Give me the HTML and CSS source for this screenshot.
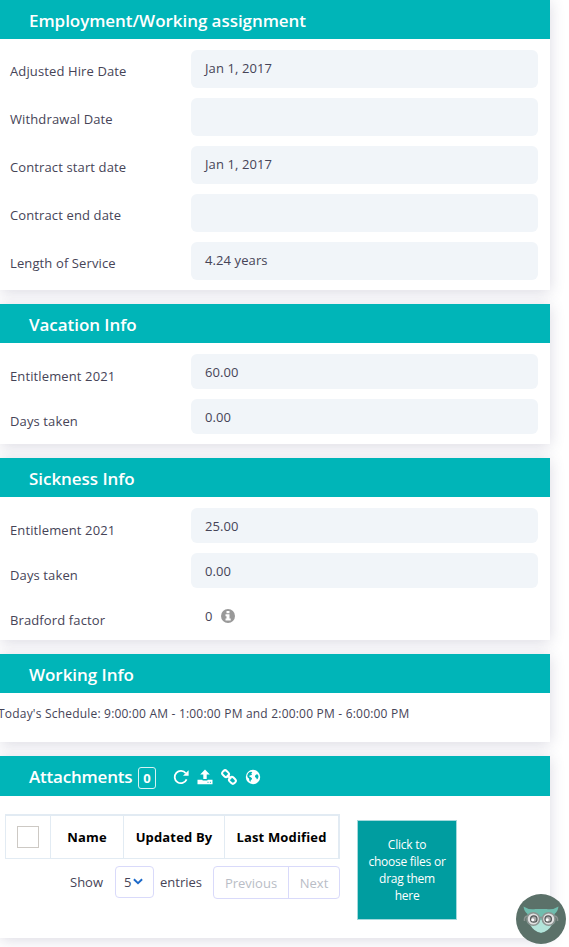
FILE: index.html
```html
<!DOCTYPE html>
<html lang="en">
<head>
    <meta charset="utf-8">
    <title>Employee Profile</title>
    <link rel="stylesheet" href="styles.css">
</head>
<body>
    <div class="container">

        <section class="card">
            <h2 class="card-head">Employment/Working assignment</h2>
            <div class="card-body">
                <div class="row"><label>Adjusted Hire Date</label><div class="field">Jan 1, 2017</div></div>
                <div class="row"><label>Withdrawal Date</label><div class="field"></div></div>
                <div class="row"><label>Contract start date</label><div class="field">Jan 1, 2017</div></div>
                <div class="row"><label>Contract end date</label><div class="field"></div></div>
                <div class="row"><label>Length of Service</label><div class="field">4.24 years</div></div>
            </div>
        </section>

        <section class="card">
            <h2 class="card-head">Vacation Info</h2>
            <div class="card-body compact">
                <div class="row"><label>Entitlement 2021</label><div class="field">60.00</div></div>
                <div class="row"><label>Days taken</label><div class="field">0.00</div></div>
            </div>
        </section>

        <section class="card">
            <h2 class="card-head">Sickness Info</h2>
            <div class="card-body compact sickness">
                <div class="row"><label>Entitlement 2021</label><div class="field">25.00</div></div>
                <div class="row"><label>Days taken</label><div class="field">0.00</div></div>
                <div class="row">
                    <label>Bradford factor</label>
                    <div class="field plain">0
                        <svg class="info" viewBox="0 0 14 14"><circle cx="7" cy="7" r="7" fill="#999"/><path d="M5.5 2h3v2.300h-3zM4.500 5.300h4v4.200h1.200v2H4.500v-2h1V7.200h-1z" fill="#fff"/></svg>
                    </div>
                </div>
            </div>
        </section>

        <section class="card">
            <h2 class="card-head">Working Info</h2>
            <div class="schedule">Today's Schedule: 9:00:00 AM - 1:00:00 PM and 2:00:00 PM - 6:00:00 PM</div>
        </section>

        <section class="card">
            <h2 class="card-head attachments-head">
                <span class="title">Attachments</span>
                <span class="count">0</span>
                <span class="tools">
                    <svg viewBox="0 0 16 16"><path d="M13.6 10.400A6.200 6.200 0 1 1 12.800 4.200" fill="none" stroke="#fff" stroke-width="1.800"/><path d="M15.600 1.200v5.600H10z" fill="#fff"/></svg>
                    <svg viewBox="0 0 16 16"><path d="M8 0.500L12.800 5.500H9.700V10H6.300V5.500H3.200z" fill="#fff"/><path d="M.5 10.700h4.700l.6.9h4.400l.6-.9h4.700V15.300H.5z" fill="#fff"/><path d="M10.500 13.300h1M12.900 13.300h1" stroke="#00b5b8" stroke-width="1"/></svg>
                    <svg viewBox="0 0 16 16"><g fill="none" stroke="#fff" stroke-width="2"><rect x="1.200" y="2" width="6.800" height="5.400" rx="2.200" transform="rotate(45 4.600 4.700)"/><rect x="8" y="8.600" width="6.800" height="5.400" rx="2.200" transform="rotate(45 11.400 11.300)"/><path d="M6 6l4 4"/></g></svg>
                    <svg viewBox="0 0 16 16"><circle cx="8" cy="8" r="7.200" fill="#fff"/><path d="M3 4.500L4.600 3l1.700-.2 1.100.8-1.200 1 .9.900-1.100.8-1.400.3-.4 1 1.700.7 1.200 1.100-.4 1.200-1 .8-.3 1.600-1-1.200-.4-2.200L2.700 8.500 2.200 6.800zM10.300 6.200l1.500-1 1.200.5.5 1.700-.4 1.900-1.100 1.200-.9-1.800-1.200-.7z" fill="#00b5b8"/></svg>
                </span>
            </h2>
            <div class="attachments">
                <div class="list">
                    <table>
                        <tr>
                            <th class="check"><span class="box"></span></th>
                            <th class="name">Name</th>
                            <th class="updated">Updated By</th>
                            <th>Last Modified</th>
                        </tr>
                    </table>
                    <div class="paging">
                        <span>Show</span>
                        <span class="select">5<svg viewBox="0 0 9 6"><path d="M.8 1l3.700 3.600L8.200 1" fill="none" stroke="#1b69c9" stroke-width="1.700"/></svg></span>
                        <span class="entries">entries</span>
                        <div class="pager"><span class="prev">Previous</span><span class="next">Next</span></div>
                    </div>
                </div>
                <div class="dropzone">Click to<br>choose files or<br>drag them<br>here</div>
            </div>
        </section>
    </div>

    <!-- help assistant -->
    <div class="helper">
        <svg viewBox="0 0 50 50">
            <circle cx="25" cy="25" r="25" fill="#5b7169"/>
            <path d="M7.500 12.500q5 3.500 12 2.500h11q7 1 12-2.500-.5 4.500-4 7.500v9Q32 34 25 39q-7-5-13.500-10v-9Q8 17 7.500 12.500z" fill="#70bdae"/>
            <path d="M14 30.500l7-1 4-4 4 4 7 1q-4 7.500-11 8.200-7-.7-11-8.200z" fill="#b3e4da"/>
            <g fill="#e2e2e2" stroke="#8b9491" stroke-width="1.600"><circle cx="17.300" cy="25" r="6.300"/><circle cx="32.700" cy="25" r="6.300"/></g>
            <path d="M11 22q-3 1-2.500 5M39 22q3 1 2.500 5M23.500 24q1.500-1.500 3 0" fill="none" stroke="#8b9491" stroke-width="1.500"/>
            <g fill="#aaa" stroke="#555a5a" stroke-width="1.300"><circle cx="17.800" cy="25" r="3.200"/><circle cx="32.200" cy="25" r="3.200"/></g>
            <circle cx="16.700" cy="25.700" r="1.500" fill="#fff"/><circle cx="31.200" cy="25.700" r="1.500" fill="#fff"/>
        </svg>
    </div>
</body>
</html>
```

FILE: styles.css
```css
* {
    box-sizing: border-box;
}
body {
    margin: 0;
    height: 947px;
    overflow: hidden;
    background: #fff;
    color: #464457;
    font-family: "Segoe UI", "Open Sans", "Noto Sans", sans-serif;
    font-size: 13px;
}
.container {
    width: 550px;
    display: flex;
    flex-direction: column;
    gap: 14px;
}
.card {
    background: #fff;
    box-shadow: 0 2px 14px rgba(69, 65, 110, .2);
}
.card-head {
    margin: 0;
    height: 39px;
    padding-left: 29px;
    background: #00b5b8;
    color: #fff;
    font-size: 17px;
    line-height: 41px;
    font-weight: 600;
    letter-spacing: -.05px;
}
.card-body {
    padding: 11px 12px 10px 10px;
    display: flex;
    flex-direction: column;
    gap: 10px;
}
.row {
    display: grid;
    grid-template-columns: 181px 1fr;
    grid-template-rows: 100%;
    height: 38px;
}
.row label {
    padding-top: 4px;
    line-height: 35px;
    letter-spacing: .12px;
}
.field {
    background: #f1f5f9;
    border-radius: 6px;
    padding-left: 14px;
    line-height: 36px;
    letter-spacing: .1px;
}
.compact .row {
    height: 35px;
}
.compact label {
    padding-top: 5px;
}
.sickness {
    padding-bottom: 7px;
}
.field.plain {
    background: none;
}
.info {
    width: 14px;
    height: 14px;
    margin-left: 5px;
    vertical-align: -2px;
}
.schedule {
    height: 49px;
    margin-left: -2px;
    line-height: 41px;
    font-size: 12px;
    letter-spacing: .2px;
    white-space: nowrap;
}

/* attachments */
.attachments-head {
    height: 40px;
    display: flex;
    align-items: center;
}
.title {
    width: 109px;
    letter-spacing: -.2px;
}
.count {
    width: 18px;
    height: 22px;
    margin-top: 3px;
    border: 1px solid #d5f3f3;
    border-radius: 3px;
    font-size: 13px;
    font-weight: 700;
    line-height: 20px;
    text-align: center;
}
.tools {
    display: flex;
    gap: 8px;
    margin: 2px 0 0 17px;
}
.tools svg {
    width: 16px;
    height: 16px;
}
.attachments {
    height: 142px;
    padding: 18px 0 0 5px;
    display: flex;
}
.list {
    width: 335px;
}
table {
    width: 335px;
    height: 45px;
    border: 1px solid #e2ebf3;
    border-top-width: 2px;
    border-right-width: 2px;
    border-spacing: 0;
    table-layout: fixed;
}
th {
    padding: 0;
    color: #000;
    font-size: 13px;
    font-weight: 700;
    letter-spacing: .15px;
}
th + th {
    border-left: 1px solid #e2ebf3;
}
.check {
    width: 44px;
}
.name {
    width: 73px;
}
.updated {
    width: 101px;
}
.box {
    display: block;
    width: 22px;
    height: 22px;
    margin: 0 auto;
    border: 1px solid #cdc9c4;
}
.paging {
    display: flex;
    justify-content: flex-end;
    margin-top: 7px;
    line-height: 32px;
}
.select {
    width: 39px;
    height: 32px;
    margin: 0 6px 0 12px;
    padding-left: 8px;
    border: 1px solid #d9dafa;
    border-radius: 4px;
    line-height: 30px;
}
.select svg {
    width: 10px;
    height: 7px;
    margin-left: 2px;
    vertical-align: 2px;
}
.pager {
    display: flex;
    width: 127px;
    height: 33px;
    margin-left: 11px;
    border: 1px solid #d9dafa;
    border-radius: 4px;
    color: #b9bdc6;
    text-align: center;
}
.prev {
    width: 75px;
    border-right: 1px solid #d9dafa;
}
.next {
    flex: 1;
}
.dropzone {
    width: 100px;
    height: 100px;
    margin: 6px 0 0 17px;
    padding-top: 15px;
    border: 1px solid #a4d9dc;
    background: #009da0;
    color: #fff;
    font-size: 12px;
    line-height: 17px;
    letter-spacing: -.25px;
    text-align: center;
}

/* floats above the page in the corner */
.helper {
    position: absolute;
    left: 516px;
    top: 894px;
    width: 50px;
    height: 50px;
}
.helper svg {
    display: block;
}
```
